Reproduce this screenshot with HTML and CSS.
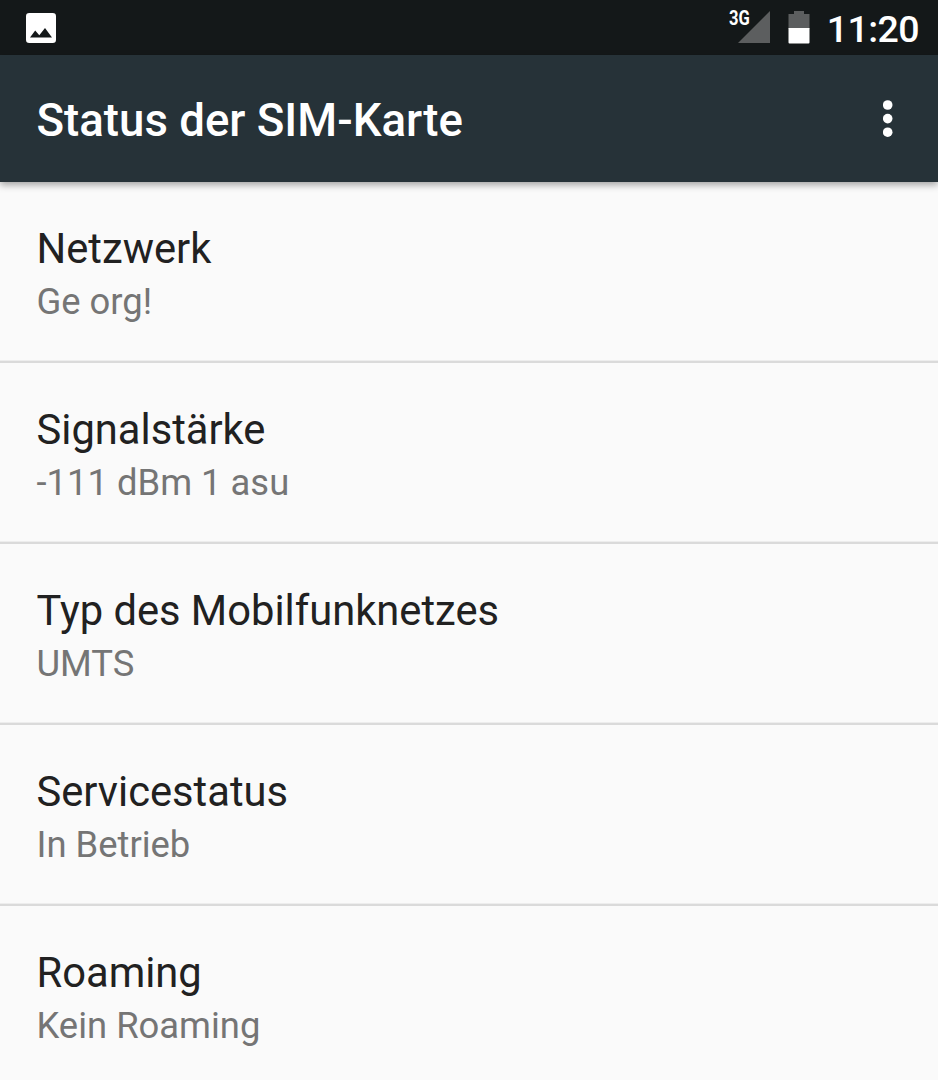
FILE: index.html
```html
<!DOCTYPE html>
<html lang="de">
<head>
  <meta charset="UTF-8">
  <meta name="viewport" content="width=device-width, initial-scale=1.0">
  <title>Status der SIM-Karte</title>
  <link rel="stylesheet" href="styles.css">
</head>
<body>
  <!-- Statusleiste -->
  <div class="statusbar">
    <svg class="icon-image" viewBox="0 0 30 30">
      <path fill="#fff" fill-rule="evenodd" d="M3.300 0h23.400A3.300 3.300 0 0 1 30 3.300v23.400a3.300 3.300 0 0 1-3.300 3.300H3.300A3.300 3.300 0 0 1 0 26.700V3.300A3.300 3.300 0 0 1 3.300 0zM9.200 17.400L4 24.500h22L19 15l-5.700 7.300z"/>
    </svg>
    <div class="status-right">
      <div class="signal">
        <span class="signal-type">3G</span>
        <svg viewBox="0 0 32 32"><path fill="#5c5e5f" d="M32 0v32H0z"/></svg>
      </div>
      <svg class="battery" viewBox="0 0 22 33">
        <path fill="#5c5e5f" d="M6 0h10v3h5.500v15H.5V3H6z"/>
        <path fill="#fff" d="M.5 17h21v14.500a1 1 0 0 1-1 1h-19a1 1 0 0 1-1-1z"/>
      </svg>
      <span class="clock">11:20</span>
    </div>
  </div>

  <!-- Titelleiste -->
  <div class="toolbar">
    <h1>Status der SIM-Karte</h1>
    <svg class="menu" viewBox="0 0 10 38">
      <circle cx="4.700" cy="5" r="4.800"/>
      <circle cx="4.700" cy="18.600" r="4.800"/>
      <circle cx="4.700" cy="32.200" r="4.800"/>
    </svg>
  </div>

  <!-- Einträge -->
  <div class="list">
    <div class="item">
      <h2>Netzwerk</h2>
      <p>Ge org!</p>
    </div>
    <div class="item">
      <h2>Signalstärke</h2>
      <p>-111 dBm 1 asu</p>
    </div>
    <div class="item">
      <h2>Typ des Mobilfunknetzes</h2>
      <p>UMTS</p>
    </div>
    <div class="item">
      <h2>Servicestatus</h2>
      <p>In Betrieb</p>
    </div>
    <div class="item">
      <h2>Roaming</h2>
      <p>Kein Roaming</p>
    </div>
  </div>
</body>
</html>
```
FILE: styles.css
```css
body {
  margin: 0;
  height: 1080px;
  overflow: hidden;
  background: #fafafa;
  font-family: Roboto, sans-serif;
}
h1, h2, p {
  margin: 0;
}
.statusbar {
  display: flex;
  justify-content: space-between;
  align-items: center;
  box-sizing: border-box;
  height: 55px;
  padding: 0 19px 0 26px;
  background: #141819;
  color: white;
}
.icon-image {
  width: 30px;
  height: 30px;
}
.status-right {
  display: flex;
  align-items: center;
}
.signal {
  display: flex;
  align-items: flex-start;
  margin-bottom: 1px;
}
.signal-type {
  margin: -1px -16px 0 0;
  font-size: 19.500px;
  line-height: 18px;
  font-weight: bold;
  transform: scaleX(0.85);
  transform-origin: left;
}
.signal svg {
  width: 32px;
  height: 32px;
}
.battery {
  width: 22px;
  height: 33px;
  margin: 0 17px 0 18px;
}
.clock {
  padding-top: 2px;
  font-size: 37.500px;
  line-height: 52px;
  font-weight: 500;
  letter-spacing: -0.600px;
}
.toolbar {
  position: relative; /* Schatten liegt über der Liste */
  display: flex;
  justify-content: space-between;
  align-items: center;
  box-sizing: border-box;
  height: 127px;
  padding: 0 45px 0 36.500px;
  background: #263238;
  color: white;
  box-shadow: 0 3px 7px rgba(0, 0, 0, 0.35);
}
.toolbar h1 {
  padding-top: 4px;
  font-size: 45.600px;
  line-height: 54px;
  font-weight: 500;
}
.menu {
  width: 10px;
  height: 38px;
  fill: white;
}
.item {
  box-sizing: border-box;
  height: 181px;
  padding: 42px 36.500px 0;
  border-bottom: 2px solid #dadada;
  box-shadow: inset 0 -1px #ededed;
}
.item h2 {
  color: #212121;
  font-size: 41.700px;
  line-height: 50px;
  font-weight: 400;
}
.item p {
  margin-top: 7px;
  color: #757575;
  font-size: 36.400px;
  line-height: 42px;
}
```
